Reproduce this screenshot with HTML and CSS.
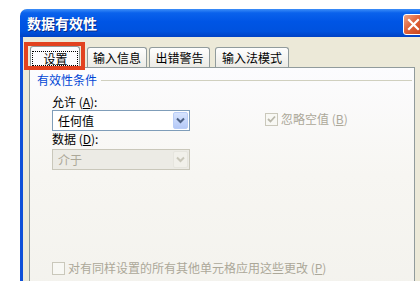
FILE: index.html
```html
<!DOCTYPE html>
<html lang="zh-CN">
<head>
  <meta charset="UTF-8">
  <title>数据有效性</title>
  <link rel="stylesheet" href="styles.css">
</head>
<body>
  <div class="window">
    <div class="titlebar">
      <span class="title">数据有效性</span>
      <span class="close">
        <svg width="13" height="13" viewBox="0 0 13 13"><path d="M2 2 L11 11 M11 2 L2 11" stroke="#fff" stroke-width="2.2" stroke-linecap="square"/></svg>
      </span>
    </div>
    <div class="frame">
      <div class="tabs">
        <div class="tab active"><span class="focus">设置</span><span class="mark"></span></div>
        <div class="tab t2">输入信息</div>
        <div class="tab t3">出错警告</div>
        <div class="tab t4">输入法模式</div>
      </div>
      <div class="panel">
        <div class="group-head">
          <span class="group-label">有效性条件</span>
          <span class="group-line"></span>
        </div>
        <div class="fields">
          <div class="col">
            <div class="label">允许 (<u>A</u>):</div>
            <div class="select">
              <span class="value">任何值</span>
              <span class="drop">
                <svg width="9" height="7" viewBox="0 0 9 7"><path d="M1 1.5 L4.5 5 L8 1.5" fill="none" stroke="#4d6185" stroke-width="2"/></svg>
              </span>
            </div>
            <div class="label second">数据 (<u>D</u>):</div>
            <div class="select disabled">
              <span class="value">介于</span>
              <span class="drop">
                <svg width="9" height="7" viewBox="0 0 9 7"><path d="M1 1.5 L4.5 5 L8 1.5" fill="none" stroke="#c9c7ba" stroke-width="2"/></svg>
              </span>
            </div>
          </div>
          <label class="check ignore">
            <span class="box">
              <svg width="9" height="8" viewBox="0 0 9 8"><path d="M1 4 L3.5 6.5 L8 1.5" fill="none" stroke="#bab8ab" stroke-width="1.8"/></svg>
            </span>
            忽略空值 (<u>B</u>)
          </label>
        </div>
        <label class="check apply">
          <span class="box"></span>
          对有同样设置的所有其他单元格应用这些更改 (<u>P</u>)
        </label>
      </div>
    </div>
  </div>
</body>
</html>
```

FILE: styles.css
```css
body {
  margin: 0;
  background: #fff;
  font-family: "Noto Sans CJK SC", "Liberation Sans", sans-serif;
  font-size: 12px;
  overflow: hidden;
  height: 281px;
}
.window {
  margin: 9px 0 0 20px;
  width: 410px;
  background: #ece9d8;
  border-top-left-radius: 7px;
  overflow: hidden;
}
.titlebar {
  height: 28px;
  display: flex;
  align-items: center;
  padding: 0 6px 0 7px;
  background: linear-gradient(#3d8ef8 0%, #0a62ec 14%, #0055e5 45%, #0052de 80%, #0042c4 100%);
}
.title {
  color: #fff;
  font-weight: bold;
  font-size: 14px;
  line-height: 16px;
  text-shadow: 1px 1px 0 #0a2d8a;
}
.close {
  margin-left: auto;
  margin-top: 2px;
  width: 19px;
  height: 19px;
  border: 1px solid #fff;
  border-radius: 3px;
  background: linear-gradient(135deg, #f0a587 0%, #e0633a 45%, #c6431c 100%);
  display: flex;
  align-items: center;
  justify-content: center;
}
.frame {
  border-left: 3px solid #0d4fd8;
  height: 244px;
}
.tabs {
  height: 30px;
  display: flex;
  align-items: flex-end;
  padding-left: 7px;
  position: relative;
  z-index: 2;
}
.tab {
  height: 20px;
  box-sizing: border-box;
  border: 1px solid #919b9c;
  border-bottom: none;
  border-radius: 3px 3px 0 0;
  background: linear-gradient(#fefefe, #ecebe6);
  display: flex;
  align-items: center;
  justify-content: center;
  line-height: 14px;
  color: #000;
}
.tab.active {
  position: relative;
  width: 50px;
  height: 22px;
  margin-bottom: -1px;
  background: #fcfcfe;
}
.focus {
  outline: 1px dotted #000;
  outline-offset: 0;
  padding: 0 9px 0 10px;
  line-height: 13px;
  margin-top: 1px;
}
.mark {
  position: absolute;
  top: -5px;
  left: -7px;
  right: -6px;
  bottom: -2px;
  border: 4px solid #e2421f;
}
.t2 { width: 60px; margin-left: 7px; }
.t3 { width: 61px; margin-left: 2px; }
.t4 { width: 74px; margin-left: 5px; }
.panel {
  margin-left: 6px;
  width: 386px;
  height: 240px;
  box-sizing: border-box;
  border: 1px solid #919b9c;
  background: linear-gradient(#fcfcfe 0%, #f7f6f2 45%, #f3f2ed 100%);
  position: relative;
  z-index: 1;
}
.group-head {
  display: flex;
  align-items: center;
  padding: 5px 2px 0 7px;
  height: 14px;
}
.group-label {
  color: #0046d5;
  line-height: 14px;
}
.group-line {
  flex: 1;
  margin-left: 4px;
  border-top: 1px solid #d0d0bf;
}
.fields {
  display: flex;
  align-items: flex-start;
  padding-left: 22px;
  margin-top: 8px;
}
.col {
  width: 138px;
}
.label {
  line-height: 14px;
  height: 14px;
  color: #000;
}
.label.second {
  margin-top: 1px;
}
.select {
  margin-top: 1px;
  height: 21px;
  box-sizing: border-box;
  border: 1px solid #7f9db9;
  background: #fff;
  display: flex;
  align-items: center;
  padding: 1px;
}
.label.second + .select {
  margin-top: 3px;
}
.value {
  flex: 1;
  padding-left: 4px;
  line-height: 14px;
}
.drop {
  width: 15px;
  height: 17px;
  border-radius: 2px;
  border: 1px solid #b9cdf7;
  box-sizing: border-box;
  background: linear-gradient(#d7e4fe, #b5c9f7);
  display: flex;
  align-items: center;
  justify-content: center;
}
.select.disabled {
  border-color: #c9c7ba;
  background: #ecebe5;
}
.select.disabled .value {
  color: #aca899;
}
.select.disabled .drop {
  border-color: #e6e5de;
  background: #f1f0ea;
}
.check {
  display: flex;
  align-items: center;
  color: #aca899;
  line-height: 14px;
}
.box {
  width: 13px;
  height: 13px;
  box-sizing: border-box;
  border: 1px solid #cac8bb;
  background: #f8f8f4;
  margin-right: 3px;
  display: flex;
  align-items: center;
  justify-content: center;
}
.ignore {
  margin-left: 75px;
  margin-top: 17px;
}
.apply {
  margin: 91px 0 0 22px;
}
```
